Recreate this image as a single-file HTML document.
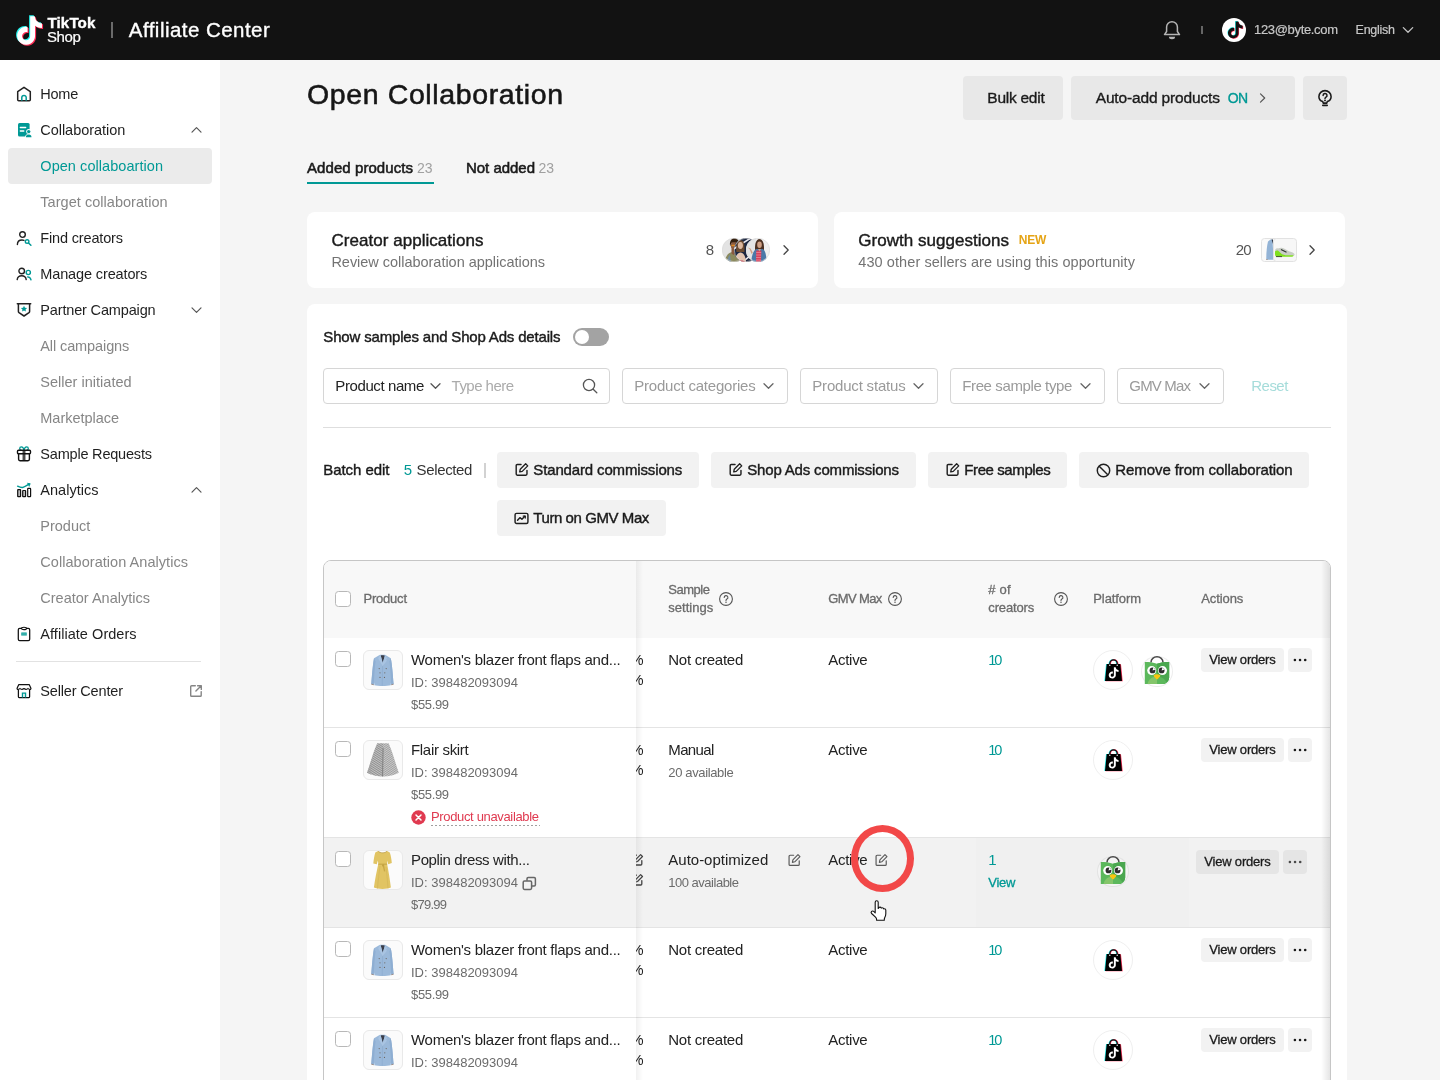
<!DOCTYPE html>
<html lang="en"><head><meta charset="utf-8"><title>Open Collaboration - Affiliate Center</title>
<style>
*{box-sizing:border-box;margin:0;padding:0}
html,body{width:1440px;height:1080px;overflow:hidden}
body{background:#f5f5f5;font-family:"Liberation Sans",sans-serif;color:#1a1a1a;position:relative}
.t{position:absolute;white-space:nowrap;display:inline-block;line-height:1}
.b{position:absolute;display:block}
#root{position:absolute;left:0;top:0;width:1440px;height:1080px;will-change:transform}
</style></head><body><div id="root">
<div class="b" style="left:0.00px;top:0.00px;width:1440.00px;height:60.00px;background:#121212;border-radius:0px;"></div>
<svg class="b" style="left:14.00px;top:14.60px;" width="32" height="34" viewBox="0 0 32 34" fill="none"><g transform="translate(1.3,1.2) scale(1.19)"><path d="M12.525.02c1.31-.02 2.61-.01 3.91-.02.08 1.53.63 3.09 1.75 4.17 1.12 1.11 2.7 1.62 4.24 1.79v4.03c-1.44-.05-2.89-.35-4.2-.97-.57-.26-1.1-.59-1.62-.93-.01 2.92.01 5.84-.02 8.75-.08 1.4-.54 2.79-1.35 3.94-1.31 1.92-3.58 3.17-5.91 3.21-1.43.08-2.86-.31-4.08-1.03-2.02-1.19-3.44-3.37-3.65-5.71-.02-.5-.03-1-.01-1.49.18-1.9 1.12-3.72 2.58-4.96 1.66-1.44 3.98-2.13 6.15-1.72.02 1.48-.04 2.96-.04 4.44-.99-.32-2.15-.23-3.02.37-.63.41-1.11 1.04-1.36 1.75-.21.51-.15 1.07-.14 1.61.24 1.64 1.82 3.02 3.5 2.87 1.12-.01 2.19-.66 2.77-1.61.19-.33.4-.67.41-1.06.1-1.79.06-3.57.07-5.36.01-4.03-.01-8.05.02-12.07z" fill="#25f4ee" transform="translate(-0.9,-0.8)"></path><path d="M12.525.02c1.31-.02 2.61-.01 3.91-.02.08 1.53.63 3.09 1.75 4.17 1.12 1.11 2.7 1.62 4.24 1.79v4.03c-1.44-.05-2.89-.35-4.2-.97-.57-.26-1.1-.59-1.62-.93-.01 2.92.01 5.84-.02 8.75-.08 1.4-.54 2.79-1.35 3.94-1.31 1.92-3.58 3.17-5.91 3.21-1.43.08-2.86-.31-4.08-1.03-2.02-1.19-3.44-3.37-3.65-5.71-.02-.5-.03-1-.01-1.49.18-1.9 1.12-3.72 2.58-4.96 1.66-1.44 3.98-2.13 6.15-1.72.02 1.48-.04 2.96-.04 4.44-.99-.32-2.15-.23-3.02.37-.63.41-1.11 1.04-1.36 1.75-.21.51-.15 1.07-.14 1.61.24 1.64 1.82 3.02 3.5 2.87 1.12-.01 2.19-.66 2.77-1.61.19-.33.4-.67.41-1.06.1-1.79.06-3.57.07-5.36.01-4.03-.01-8.05.02-12.07z" fill="#fe2c55" transform="translate(0.9,0.8)"></path><path d="M12.525.02c1.31-.02 2.61-.01 3.91-.02.08 1.53.63 3.09 1.75 4.17 1.12 1.11 2.7 1.62 4.24 1.79v4.03c-1.44-.05-2.89-.35-4.2-.97-.57-.26-1.1-.59-1.62-.93-.01 2.92.01 5.84-.02 8.75-.08 1.4-.54 2.79-1.35 3.94-1.31 1.92-3.58 3.17-5.91 3.21-1.43.08-2.86-.31-4.08-1.03-2.02-1.19-3.44-3.37-3.65-5.71-.02-.5-.03-1-.01-1.49.18-1.9 1.12-3.72 2.58-4.96 1.66-1.44 3.98-2.13 6.15-1.72.02 1.48-.04 2.96-.04 4.44-.99-.32-2.15-.23-3.02.37-.63.41-1.11 1.04-1.36 1.75-.21.51-.15 1.07-.14 1.61.24 1.64 1.82 3.02 3.5 2.87 1.12-.01 2.19-.66 2.77-1.61.19-.33.4-.67.41-1.06.1-1.79.06-3.57.07-5.36.01-4.03-.01-8.05.02-12.07z" fill="#fff"></path></g></svg>
<span class="t" style="left: 47.5px; top: 15.33px; font-size: 15.2px; font-weight: 700; color: rgb(255, 255, 255); -webkit-text-stroke: 0.35px rgb(255, 255, 255); letter-spacing: 0.071px; margin-right: -0.071px;">TikTok</span>
<span class="t" style="left: 46.9px; top: 29.2px; font-size: 15px; font-weight: 400; color: rgb(255, 255, 255); -webkit-text-stroke: 0.2px rgb(255, 255, 255); letter-spacing: -0.349px; margin-right: 0.349px;">Shop</span>
<div class="b" style="left:111.20px;top:22.00px;width:1.80px;height:16.00px;background:#6a6a6a;border-radius:0px;"></div>
<span class="t" style="left: 128.8px; top: 19.75px; font-size: 20.5px; font-weight: 400; color: rgb(255, 255, 255); -webkit-text-stroke: 0.35px rgb(255, 255, 255); letter-spacing: 0.46px; margin-right: -0.46px;">Affiliate Center</span>
<svg class="b" style="left:1162.00px;top:20.00px;" width="20" height="21" viewBox="0 0 20 21" fill="none"><path d="M2.500 14.600L4.600 11.500V7.050a5.400 5.400 0 0 1 10.800 0V11.500L17.500 14.600Z" stroke="#b4b4b4" stroke-width="1.500" stroke-linejoin="round"></path><path d="M6.900 16.700h6.200a3.100 2.500 0 0 1-6.200 0z" fill="#b4b4b4"></path></svg>
<div class="b" style="left:1201.00px;top:26.00px;width:2.00px;height:8.00px;background:#666;border-radius:0px;"></div>
<div class="b" style="left:1222.00px;top:18.00px;width:24.00px;height:24.00px;background:#fff;border-radius:12px;"></div>
<svg class="b" style="left:1225.50px;top:20.50px;" width="18" height="18" viewBox="0 0 18 18" fill="none"><g transform="translate(0.9,0.5) scale(0.7)"><path d="M12.525.02c1.31-.02 2.61-.01 3.91-.02.08 1.53.63 3.09 1.75 4.17 1.12 1.11 2.7 1.62 4.24 1.79v4.03c-1.44-.05-2.89-.35-4.2-.97-.57-.26-1.1-.59-1.62-.93-.01 2.92.01 5.84-.02 8.75-.08 1.4-.54 2.79-1.35 3.94-1.31 1.92-3.58 3.17-5.91 3.21-1.43.08-2.86-.31-4.08-1.03-2.02-1.19-3.44-3.37-3.65-5.71-.02-.5-.03-1-.01-1.49.18-1.9 1.12-3.72 2.58-4.96 1.66-1.44 3.98-2.13 6.15-1.72.02 1.48-.04 2.96-.04 4.44-.99-.32-2.15-.23-3.02.37-.63.41-1.11 1.04-1.36 1.75-.21.51-.15 1.07-.14 1.61.24 1.64 1.82 3.02 3.5 2.87 1.12-.01 2.19-.66 2.77-1.61.19-.33.4-.67.41-1.06.1-1.79.06-3.57.07-5.36.01-4.03-.01-8.05.02-12.07z" fill="#25f4ee" transform="translate(-0.8,-0.6)"></path><path d="M12.525.02c1.31-.02 2.61-.01 3.91-.02.08 1.53.63 3.09 1.75 4.17 1.12 1.11 2.7 1.62 4.24 1.79v4.03c-1.44-.05-2.89-.35-4.2-.97-.57-.26-1.1-.59-1.62-.93-.01 2.92.01 5.84-.02 8.75-.08 1.4-.54 2.79-1.35 3.94-1.31 1.92-3.58 3.17-5.91 3.21-1.43.08-2.86-.31-4.08-1.03-2.02-1.19-3.44-3.37-3.65-5.71-.02-.5-.03-1-.01-1.49.18-1.9 1.12-3.72 2.58-4.96 1.66-1.44 3.98-2.13 6.15-1.72.02 1.48-.04 2.96-.04 4.44-.99-.32-2.15-.23-3.02.37-.63.41-1.11 1.04-1.36 1.75-.21.51-.15 1.07-.14 1.61.24 1.64 1.82 3.02 3.5 2.87 1.12-.01 2.19-.66 2.77-1.61.19-.33.4-.67.41-1.06.1-1.79.06-3.57.07-5.36.01-4.03-.01-8.05.02-12.07z" fill="#fe2c55" transform="translate(0.8,0.6)"></path><path d="M12.525.02c1.31-.02 2.61-.01 3.91-.02.08 1.53.63 3.09 1.75 4.17 1.12 1.11 2.7 1.62 4.24 1.79v4.03c-1.44-.05-2.89-.35-4.2-.97-.57-.26-1.1-.59-1.62-.93-.01 2.92.01 5.84-.02 8.75-.08 1.4-.54 2.79-1.35 3.94-1.31 1.92-3.58 3.17-5.91 3.21-1.43.08-2.86-.31-4.08-1.03-2.02-1.19-3.44-3.37-3.65-5.71-.02-.5-.03-1-.01-1.49.18-1.9 1.12-3.72 2.58-4.96 1.66-1.44 3.98-2.13 6.15-1.72.02 1.48-.04 2.96-.04 4.44-.99-.32-2.15-.23-3.02.37-.63.41-1.11 1.04-1.36 1.75-.21.51-.15 1.07-.14 1.61.24 1.64 1.82 3.02 3.5 2.87 1.12-.01 2.19-.66 2.77-1.61.19-.33.4-.67.41-1.06.1-1.79.06-3.57.07-5.36.01-4.03-.01-8.05.02-12.07z" fill="#111"></path></g></svg>
<span class="t" style="left: 1254px; top: 23.2px; font-size: 13px; font-weight: 400; color: rgb(200, 200, 200); -webkit-text-stroke: 0.2px rgb(200, 200, 200); letter-spacing: -0.331px; margin-right: 0.331px;">123@byte.com</span>
<span class="t" style="left: 1355.6px; top: 23.62px; font-size: 12.5px; font-weight: 400; color: rgb(200, 200, 200); -webkit-text-stroke: 0.2px rgb(200, 200, 200); letter-spacing: -0.267px; margin-right: 0.267px;">English</span>
<svg class="b" style="left:1401.70px;top:26.00px;" width="12" height="8" viewBox="0 0 12 8" fill="none"><path d="M1.3 1.6L6 6.3l4.7-4.7" stroke="#c4c4c4" stroke-width="1.3" stroke-linecap="round" stroke-linejoin="round"></path></svg>
<div class="b" style="left:0.00px;top:60.00px;width:220.00px;height:1020.00px;background:#fff;border-radius:0px;"></div>
<div class="b" style="left:8.00px;top:148.00px;width:204.00px;height:36.00px;background:#ebebeb;border-radius:4px;"></div>
<span class="t" style="left: 40.3px; top: 86.73px; font-size: 14.5px; font-weight: 400; color: rgb(31, 31, 31); letter-spacing: -0.229px; margin-right: 0.229px;">Home</span>
<span class="t" style="left: 40.3px; top: 122.73px; font-size: 14.5px; font-weight: 400; color: rgb(31, 31, 31); letter-spacing: -0.038px; margin-right: 0.038px;">Collaboration</span>
<span class="t" style="left: 40.3px; top: 158.73px; font-size: 14.5px; font-weight: 400; color: rgb(0, 153, 149); letter-spacing: 0.057px; margin-right: -0.057px;">Open collaboartion</span>
<span class="t" style="left: 40.3px; top: 194.73px; font-size: 14.5px; font-weight: 400; color: rgb(134, 134, 134); letter-spacing: 0.039px; margin-right: -0.039px;">Target collaboration</span>
<span class="t" style="left: 40.3px; top: 230.73px; font-size: 14.5px; font-weight: 400; color: rgb(31, 31, 31); letter-spacing: -0.16px; margin-right: 0.16px;">Find creators</span>
<span class="t" style="left: 40.3px; top: 266.73px; font-size: 14.5px; font-weight: 400; color: rgb(31, 31, 31); letter-spacing: -0.129px; margin-right: 0.129px;">Manage creators</span>
<span class="t" style="left: 40.3px; top: 302.73px; font-size: 14.5px; font-weight: 400; color: rgb(31, 31, 31); letter-spacing: -0.158px; margin-right: 0.158px;">Partner Campaign</span>
<span class="t" style="left: 40.3px; top: 338.73px; font-size: 14.5px; font-weight: 400; color: rgb(134, 134, 134); letter-spacing: -0.105px; margin-right: 0.105px;">All campaigns</span>
<span class="t" style="left: 40.3px; top: 374.73px; font-size: 14.5px; font-weight: 400; color: rgb(134, 134, 134); letter-spacing: 0.015px; margin-right: -0.015px;">Seller initiated</span>
<span class="t" style="left: 40.3px; top: 410.73px; font-size: 14.5px; font-weight: 400; color: rgb(134, 134, 134); letter-spacing: -0.028px; margin-right: 0.028px;">Marketplace</span>
<span class="t" style="left: 40.3px; top: 446.73px; font-size: 14.5px; font-weight: 400; color: rgb(31, 31, 31); letter-spacing: -0.197px; margin-right: 0.197px;">Sample Requests</span>
<span class="t" style="left: 40.3px; top: 482.73px; font-size: 14.5px; font-weight: 400; color: rgb(31, 31, 31); letter-spacing: 0.034px; margin-right: -0.034px;">Analytics</span>
<span class="t" style="left: 40.3px; top: 518.73px; font-size: 14.5px; font-weight: 400; color: rgb(134, 134, 134); letter-spacing: 0.003px; margin-right: -0.003px;">Product</span>
<span class="t" style="left: 40.3px; top: 554.73px; font-size: 14.5px; font-weight: 400; color: rgb(134, 134, 134); letter-spacing: 0.045px; margin-right: -0.045px;">Collaboration Analytics</span>
<span class="t" style="left: 40.3px; top: 590.73px; font-size: 14.5px; font-weight: 400; color: rgb(134, 134, 134); letter-spacing: 0.006px; margin-right: -0.006px;">Creator Analytics</span>
<span class="t" style="left: 40.3px; top: 626.73px; font-size: 14.5px; font-weight: 400; color: rgb(31, 31, 31); letter-spacing: 0.044px; margin-right: -0.044px;">Affiliate Orders</span>
<span class="t" style="left: 40.3px; top: 683.73px; font-size: 14.5px; font-weight: 400; color: rgb(31, 31, 31); letter-spacing: -0.16px; margin-right: 0.16px;">Seller Center</span>
<div class="b" style="left:16.00px;top:661.40px;width:184.70px;height:1.00px;background:#e2e2e2;border-radius:0px;"></div>
<svg class="b" style="left:190.50px;top:126.00px;" width="11" height="8" viewBox="0 0 11 8" fill="none"><path d="M1 6.2L5.5 1.7 10 6.2" stroke="#555" stroke-width="1.2" stroke-linecap="round" stroke-linejoin="round"></path></svg>
<svg class="b" style="left:190.50px;top:306.00px;" width="11" height="8" viewBox="0 0 11 8" fill="none"><path d="M1 1.8L5.5 6.3 10 1.8" stroke="#555" stroke-width="1.2" stroke-linecap="round" stroke-linejoin="round"></path></svg>
<svg class="b" style="left:190.50px;top:486.00px;" width="11" height="8" viewBox="0 0 11 8" fill="none"><path d="M1 6.2L5.5 1.7 10 6.2" stroke="#555" stroke-width="1.2" stroke-linecap="round" stroke-linejoin="round"></path></svg>
<svg class="b" style="left:189.30px;top:684.30px;" width="14" height="14" viewBox="0 0 14 14" fill="none"><path d="M6.300 1.800H2.600a.9.900 0 0 0-.9.900v8.700c0 .5.400.9.900.9h8.700c.5 0 .9-.4.900-.9V7.600" stroke="#858585" stroke-width="1.400" stroke-linecap="round"></path><path d="M8.600 1.700h3.700v3.700M12 2L6.900 7.100" stroke="#858585" stroke-width="1.400" stroke-linecap="round" stroke-linejoin="round"></path></svg>
<svg class="b" style="left:15.00px;top:85.00px;" width="18" height="18" viewBox="0 0 18 18" fill="none"><path d="M2.7 6.6L9 2.3l6.300 4.300v8.100a1 1 0 0 1-1 1H3.700a1 1 0 0 1-1-1z" stroke="#222" stroke-width="1.500" stroke-linejoin="round"></path><path d="M6.800 15.800v-3.200a2.200 2.200 0 0 1 4.400 0v3.200" stroke="#009995" stroke-width="1.500"></path></svg>
<svg class="b" style="left:16.00px;top:121.00px;" width="18" height="18" viewBox="0 0 18 18" fill="none"><rect x="2" y="2" width="11.600" height="13.400" rx="1.500" fill="#009995"></rect><path d="M4.300 6.500h5.400M4.300 10h3.500" stroke="#fff" stroke-width="1.300" stroke-linecap="round"></path><circle cx="12.700" cy="10.600" r="2.500" fill="#fff"></circle><circle cx="12.700" cy="10.600" r="1.700" fill="#009995"></circle><path d="M9 16.800a3.700 3.700 0 0 1 7.400 0z" fill="#fff"></path><path d="M9.900 16.200a2.800 2.800 0 0 1 5.600 0z" fill="#009995"></path></svg>
<svg class="b" style="left:15.00px;top:229.00px;" width="18" height="18" viewBox="0 0 18 18" fill="none"><circle cx="7.500" cy="5.600" r="2.800" stroke="#222" stroke-width="1.400"></circle><path d="M2.400 15.600c0-2.700 1.800-4.600 4.600-4.600.8 0 1.400.1 2 .3" stroke="#222" stroke-width="1.400" stroke-linecap="round"></path><circle cx="12.100" cy="12.600" r="1.800" stroke="#009995" stroke-width="1.400"></circle><path d="M13.500 14l2.400 2.300" stroke="#009995" stroke-width="1.500" stroke-linecap="round"></path></svg>
<svg class="b" style="left:15.00px;top:265.00px;" width="18" height="18" viewBox="0 0 18 18" fill="none"><circle cx="6.700" cy="6" r="2.800" stroke="#222" stroke-width="1.400"></circle><path d="M2.200 14.600c.3-2.400 2.100-3.900 4.500-3.900s4.200 1.500 4.500 3.900" stroke="#222" stroke-width="1.400" stroke-linecap="round"></path><circle cx="13.300" cy="7.500" r="2.100" stroke="#009995" stroke-width="1.400"></circle><path d="M12.600 11.900c1.900.2 3.100 1.300 3.400 3" stroke="#009995" stroke-width="1.400" stroke-linecap="round"></path></svg>
<svg class="b" style="left:15.00px;top:301.00px;" width="18" height="18" viewBox="0 0 18 18" fill="none"><path d="M2.300 2.700h13.400" stroke="#222" stroke-width="1.500" stroke-linecap="round"></path><path d="M3.400 2.900v7.600c0 .5.200.9.600 1.200L9 15l5-3.300c.4-.3.600-.7.600-1.200V2.900" stroke="#222" stroke-width="1.500" stroke-linejoin="round"></path><path d="M9 4.700l.95 1.950 2.150.3-1.550 1.500.37 2.150L9 9.600l-1.920 1 .37-2.150L5.900 6.950l2.150-.3z" fill="#009995"></path></svg>
<svg class="b" style="left:15.00px;top:445.40px;" width="18" height="18" viewBox="0 0 18 18" fill="none"><path d="M9 5.200C8.600 3 7.600 1.900 6.400 1.900c-1.100 0-1.700.8-1.700 1.700 0 .8.500 1.500 1.200 1.600M9 5.200c.4-2.200 1.400-3.300 2.600-3.300 1.100 0 1.700.8 1.700 1.700 0 .8-.5 1.500-1.200 1.600" stroke="#009995" stroke-width="1.300" stroke-linecap="round"></path><rect x="2.500" y="5.300" width="13" height="3.500" rx="1" stroke="#111" stroke-width="1.400"></rect><path d="M3.600 8.900v5.400c0 .8.600 1.400 1.400 1.400h8c.8 0 1.400-.6 1.400-1.400V8.900" stroke="#111" stroke-width="1.400"></path><path d="M8.200 5.300v10.400M9.800 5.300v10.400" stroke="#111" stroke-width="1.100"></path></svg>
<svg class="b" style="left:15.00px;top:481.00px;" width="18" height="18" viewBox="0 0 18 18" fill="none"><rect x="2.700" y="8.600" width="2.900" height="7.100" rx=".5" fill="#bbb" stroke="#111" stroke-width="1.200"></rect><rect x="7.700" y="9.500" width="2.900" height="6.200" rx=".5" fill="#bbb" stroke="#111" stroke-width="1.200"></rect><rect x="12.700" y="7.400" width="2.900" height="8.300" rx=".5" fill="#fff" stroke="#111" stroke-width="1.200"></rect><path d="M2.600 5.200c2 1 3.500 1.500 5 1.300 2-.3 4.200-2 6.800-3.600" stroke="#009995" stroke-width="1.400" stroke-linecap="round" fill="none"></path><path d="M12 1.700l3.700.8-1.500 3.400z" fill="#009995"></path></svg>
<svg class="b" style="left:15.00px;top:625.00px;" width="18" height="18" viewBox="0 0 18 18" fill="none"><rect x="3.300" y="3.400" width="11.400" height="12.200" rx="1.400" stroke="#111" stroke-width="1.250"></rect><ellipse cx="9" cy="3.400" rx="2.500" ry="1.150" fill="#fff" stroke="#111" stroke-width="1.200"></ellipse><rect x="6.200" y="7.300" width="5.600" height="3.500" rx=".4" fill="#4dbab6"></rect><path d="M6.200 9h5.600" stroke="#009995" stroke-width=".7"></path></svg>
<svg class="b" style="left:15.00px;top:682.00px;" width="18" height="18" viewBox="0 0 18 18" fill="none"><path d="M3.700 2.700h10.600l1.600 3.600c.2.500-.3 1.100-1 1.100-.9 0-1.500-.4-1.900-.9-.4.500-1 .9-1.900.9s-1.500-.4-2.100-.9c-.600.500-1.200.900-2.100.900s-1.500-.4-1.900-.9c-.4.500-1 .9-1.900.9-.7 0-1.200-.6-1-1.100z" stroke="#111" stroke-width="1.200" stroke-linejoin="round"></path><path d="M3.400 7.600v7.200c0 .4.300.7.700.7h9.800c.4 0 .7-.3.700-.7V7.600" stroke="#111" stroke-width="1.250"></path><path d="M7.500 15.400v-4.300h3v4.300" stroke="#009995" stroke-width="1.400"></path></svg>
<span class="t" style="left: 307px; top: 80.37px; font-size: 28.5px; font-weight: 400; color: rgb(22, 22, 22); -webkit-text-stroke: 0.55px rgb(22, 22, 22); letter-spacing: 0.613px; margin-right: -0.613px;">Open Collaboration</span>
<div class="b" style="left:963.00px;top:76.00px;width:100.00px;height:44.00px;background:#e8e8e8;border-radius:4px;"></div>
<span class="t" style="left: 987.3px; top: 90.18px; font-size: 15.5px; font-weight: 400; color: rgb(26, 26, 26); -webkit-text-stroke: 0.35px rgb(26, 26, 26); letter-spacing: -0.257px; margin-right: 0.257px;">Bulk edit</span>
<div class="b" style="left:1071.00px;top:76.00px;width:224.00px;height:44.00px;background:#e8e8e8;border-radius:4px;"></div>
<span class="t" style="left: 1095.7px; top: 90.18px; font-size: 15.5px; font-weight: 400; color: rgb(26, 26, 26); -webkit-text-stroke: 0.35px rgb(26, 26, 26); letter-spacing: -0.148px; margin-right: 0.148px;">Auto-add products</span>
<span class="t" style="left: 1227.7px; top: 91.45px; font-size: 14px; font-weight: 400; color: rgb(0, 153, 149); -webkit-text-stroke: 0.35px rgb(0, 153, 149); letter-spacing: -0.7px; margin-right: 0.7px;">ON</span>
<svg class="b" style="left:1258.00px;top:92.00px;" width="10" height="12" viewBox="0 0 10 12" fill="none"><path d="M2.500 1.900L6.700 6 2.500 10.100" stroke="#555" stroke-width="1.200" stroke-linecap="round" stroke-linejoin="round"></path></svg>
<div class="b" style="left:1303.00px;top:76.00px;width:44.00px;height:44.00px;background:#e8e8e8;border-radius:4px;"></div>
<svg class="b" style="left:1316.00px;top:88.00px;" width="18" height="20" viewBox="0 0 18 20" fill="none"><path d="M6.700 13.600C4.300 12.700 2.900 10.800 2.900 8.700a6.100 6.100 0 0 1 12.200 0c0 2.100-1.400 4-3.800 4.900l-.5 1.500H7.200z" stroke="#1a1a1a" stroke-width="1.550" stroke-linejoin="round"></path><path d="M6.800 17.400h4.400" stroke="#1a1a1a" stroke-width="1.600" stroke-linecap="round"></path><path d="M7.100 7.400a1.950 1.950 0 1 1 2.900 1.700c-.7.400-1 .8-1 1.500" stroke="#1a1a1a" stroke-width="1.500" stroke-linecap="round"></path><circle cx="9" cy="12.400" r=".95" fill="#1a1a1a"></circle></svg>
<span class="t" style="left: 307px; top: 160.3px; font-size: 15px; font-weight: 400; color: rgb(26, 26, 26); -webkit-text-stroke: 0.55px rgb(26, 26, 26); letter-spacing: 0.071px; margin-right: -0.071px;">Added products</span>
<span class="t" style="left: 417px; top: 161.15px; font-size: 14px; font-weight: 400; color: rgb(160, 160, 160); letter-spacing: -0.078px; margin-right: 0.078px;">23</span>
<div class="b" style="left:307.00px;top:182.00px;width:127.00px;height:2.00px;background:#009995;border-radius:0px;"></div>
<span class="t" style="left: 466px; top: 160.3px; font-size: 15px; font-weight: 400; color: rgb(26, 26, 26); -webkit-text-stroke: 0.55px rgb(26, 26, 26); letter-spacing: -0.029px; margin-right: 0.029px;">Not added</span>
<span class="t" style="left: 538.5px; top: 161.15px; font-size: 14px; font-weight: 400; color: rgb(160, 160, 160); letter-spacing: -0.078px; margin-right: 0.078px;">23</span>
<div class="b" style="left:307.00px;top:212.00px;width:511.00px;height:76.00px;background:#fff;border-radius:8px;"></div>
<div class="b" style="left:834.00px;top:212.00px;width:511.00px;height:76.00px;background:#fff;border-radius:8px;"></div>
<span class="t" style="left: 331.4px; top: 232.31px; font-size: 17px; font-weight: 400; color: rgb(26, 26, 26); -webkit-text-stroke: 0.4px rgb(26, 26, 26); letter-spacing: 0.042px; margin-right: -0.042px;">Creator applications</span>
<span class="t" style="left: 331.4px; top: 254.73px; font-size: 14.5px; font-weight: 400; color: rgb(115, 115, 115); letter-spacing: -0.025px; margin-right: 0.025px;">Review collaboration applications</span>
<span class="t" style="left: 705.7px; top: 242.3px; font-size: 15px; font-weight: 400; color: rgb(85, 85, 85); letter-spacing: 0px;">8</span>
<svg class="b" style="left:722px;top:238px" width="24" height="24" viewBox="0 0 24 24"><defs><clipPath id="av1"><circle cx="12" cy="12" r="12"></circle></clipPath></defs><g clip-path="url(#av1)"><rect width="24" height="24" fill="#e3e3e3"></rect><path d="M3 24C3.500 17 7 14.500 10.500 14L13.500 14C16 15 17 19 17.500 24Z" fill="#8b8a5e"></path><path d="M9.500 10.500H13.500V15.500L11.500 17 9.500 15.500Z" fill="#8a5a3e"></path><ellipse cx="11.800" cy="7.600" rx="3" ry="4" fill="#8e5d40"></ellipse><path d="M8 7.500C7.500 3 9.500 .3 12.500 .3C15.500 .3 17 2.500 16.500 6C15 4.500 12 4 10 4.500C9 5 8.700 6.300 8.500 8Z" fill="#34200f"></path><rect x="9.300" y="6.800" width="4.800" height="1.500" rx=".7" fill="#e08a20"></rect><path d="M5 24C5.500 20 6.500 18 8 17L9 24Z" fill="#6f8fb0" opacity=".8"></path></g><circle cx="12" cy="12" r="11.700" fill="none" stroke="#dcdcdc" stroke-width=".6"></circle></svg>
<svg class="b" style="left:734px;top:238px" width="24" height="24" viewBox="0 0 24 24"><defs><clipPath id="av2"><circle cx="12" cy="12" r="12"></circle></clipPath></defs><g clip-path="url(#av2)"><rect width="24" height="24" fill="#1d2740"></rect><path d="M-2 6L14 -4M-2 12L20 -2M6 26L26 10M12 28L28 16" stroke="#e8e8ee" stroke-width="1.600"></path><path d="M2.500 14C1.500 8 3 2.500 6.500 2.300C10 2.100 11 7 10.300 14Z" fill="#6b4a30"></path><ellipse cx="6.400" cy="7.500" rx="2.500" ry="3.400" fill="#dcb89f"></ellipse><path d="M1 24C1.500 18 3.500 14.500 6.500 14.500C9.500 14.500 11.500 18 12 24Z" fill="#e2c4b0"></path><path d="M2 24C3 21.500 10 21.500 11 24Z" fill="#c62b3c"></path></g><circle cx="12" cy="12" r="11.700" fill="none" stroke="#dcdcdc" stroke-width=".6"></circle></svg>
<svg class="b" style="left:746px;top:238px" width="24" height="24" viewBox="0 0 24 24"><defs><clipPath id="av3"><circle cx="12" cy="12" r="12"></circle></clipPath></defs><g clip-path="url(#av3)"><rect width="24" height="24" fill="#efefef"></rect><path d="M0 0H10V24H0Z" fill="#e4e4e4"></path><path d="M9.200 12.800C8.500 8 9.500 1 13.500 1C17.500 1 18.500 8 17.800 12.800Z" fill="#4a2f20"></path><ellipse cx="13.500" cy="6.800" rx="2.300" ry="3.200" fill="#cfa084"></ellipse><path d="M5.300 24C5.500 17 8 11.500 10.500 11L16.500 11C19 11.500 20.500 17 20.500 24Z" fill="#4b78a8"></path><path d="M10 24L10.300 12.500H15.300L15 24Z" fill="#d9405c"></path><path d="M10.200 14.500H15.200M10.100 17H15.100M10.100 19.500H15M10 22H15" stroke="#f0a0b0" stroke-width=".6"></path><path d="M1.800 9.400L4.500 10.500 6.800 14.500 5.500 16 3.800 11.500Z" fill="#cfa084"></path><path d="M12 11L13.500 13.500 15 11Z" fill="#cfa084"></path></g><circle cx="12" cy="12" r="11.700" fill="none" stroke="#dcdcdc" stroke-width=".6"></circle></svg>
<svg class="b" style="left:781.50px;top:244.00px;" width="9" height="12" viewBox="0 0 9 12" fill="none"><path d="M2 1.8L6.2 6 2 10.2" stroke="#444" stroke-width="1.3" stroke-linecap="round" stroke-linejoin="round"></path></svg>
<span class="t" style="left: 858.3px; top: 232.11px; font-size: 17px; font-weight: 400; color: rgb(26, 26, 26); -webkit-text-stroke: 0.4px rgb(26, 26, 26); letter-spacing: 0.026px; margin-right: -0.026px;">Growth suggestions</span>
<span class="t" style="left: 1018.7px; top: 234.14px; font-size: 12px; font-weight: 700; color: rgb(229, 164, 21); letter-spacing: -0.2px; margin-right: 0.2px;">NEW</span>
<span class="t" style="left: 858.3px; top: 255.23px; font-size: 14.5px; font-weight: 400; color: rgb(115, 115, 115); letter-spacing: 0.08px; margin-right: -0.08px;">430 other sellers are using this opportunity</span>
<span class="t" style="left: 1235.7px; top: 242.3px; font-size: 15px; font-weight: 400; color: rgb(85, 85, 85); letter-spacing: -0.688px; margin-right: 0.688px;">20</span>
<div class="b" style="left:1261px;top:238px;width:24px;height:24px;border-radius:3.500px;overflow:hidden;background:#fafafa;border:1px solid #e2e2e2"><svg class="b" style="left:-1px;top:-1px" width="24" height="24" viewBox="0 0 24 24"><path d="M9.500 1.600L11.500 1.600 12.500 21.800 5.200 21.800C5.300 15 5.800 8 7 3.500Z" fill="#93b3d6"></path><path d="M10.500 1.600H12V6Z" fill="#333a48"></path><path d="M5.200 21.500h1.500" stroke="#a87f62" stroke-width=".6"></path></svg></div>
<div class="b" style="left:1273.300px;top:238px;width:23.700px;height:24px;border-radius:3.500px;overflow:hidden;background:#f7f7f7;border:1px solid #e2e2e2"><svg class="b" style="left:-1px;top:-1px" width="24" height="24" viewBox="0 0 24 24"><path d="M2.300 11.500C3 10.500 4 10 5 10.500C7 9.500 9.500 9.500 11 10.500L16 13.300C18 14 20.500 14.500 21.500 16C21.800 17 21.300 17.800 20 17.800H4C2.500 17.800 1.800 16.500 2 14.500Z" fill="#c9cdc6"></path><path d="M2 13.500C3 12.500 4.500 12.300 5.500 13L9 16.300 12.500 17.200 20.500 17.300C20.500 18.300 19.500 18.800 18 18.800H4C2.300 18.800 1.700 17 2 13.500Z" fill="#7fe01e"></path><path d="M8 11.500L13.500 14.300" stroke="#2c3430" stroke-width="1.100"></path><path d="M3 18.600H9" stroke="#2a2a2a" stroke-width=".8"></path></svg></div>
<svg class="b" style="left:1308.30px;top:244.00px;" width="9" height="12" viewBox="0 0 9 12" fill="none"><path d="M2 1.8L6.2 6 2 10.2" stroke="#444" stroke-width="1.3" stroke-linecap="round" stroke-linejoin="round"></path></svg>
<div class="b" style="left:307.00px;top:304.00px;width:1040.00px;height:800.00px;background:#fff;border-radius:8px;"></div>
<span class="t" style="left: 323.3px; top: 329.3px; font-size: 15px; font-weight: 400; color: rgb(26, 26, 26); -webkit-text-stroke: 0.4px rgb(26, 26, 26); letter-spacing: -0.171px; margin-right: 0.171px;">Show samples and Shop Ads details</span>
<div class="b" style="left:573.00px;top:328.00px;width:36.00px;height:18.00px;background:#a3a3a3;border-radius:9px;"><div class="b" style="left:2px;top:2px;width:14px;height:14px;border-radius:7px;background:#fff"></div></div>
<div class="b" style="left:323.00px;top:368.00px;width:287.00px;height:36.00px;background:#fff;border-radius:4px;border:1px solid #d6d6d6;"></div>
<span class="t" style="left: 335.3px; top: 378.1px; font-size: 15px; font-weight: 400; color: rgb(34, 34, 34); letter-spacing: -0.399px; margin-right: 0.399px;">Product name</span>
<svg class="b" style="left:429.70px;top:382.30px;" width="11" height="8" viewBox="0 0 11 8" fill="none"><path d="M1 1.8L5.5 6.3 10 1.8" stroke="#555" stroke-width="1.3" stroke-linecap="round" stroke-linejoin="round"></path></svg>
<span class="t" style="left: 451.6px; top: 378.1px; font-size: 15px; font-weight: 400; color: rgb(171, 171, 171); letter-spacing: -0.54px; margin-right: 0.54px;">Type here</span>
<svg class="b" style="left:582.00px;top:378.00px;" width="16" height="16" viewBox="0 0 16 16" fill="none"><circle cx="7" cy="7" r="5.6" stroke="#555" stroke-width="1.3"></circle><path d="M11.2 11.2l3.6 3.6" stroke="#555" stroke-width="1.3" stroke-linecap="round"></path></svg>
<div class="b" style="left:622.30px;top:368.00px;width:165.40px;height:36.00px;background:#fff;border-radius:4px;border:1px solid #d6d6d6;"></div>
<span class="t" style="left: 634.3px; top: 378.1px; font-size: 15px; font-weight: 400; color: rgb(154, 154, 154); letter-spacing: -0.216px; margin-right: 0.216px;">Product categories</span>
<svg class="b" style="left:762.80px;top:382.30px;" width="11" height="8" viewBox="0 0 11 8" fill="none"><path d="M1 1.8L5.5 6.3 10 1.8" stroke="#666" stroke-width="1.3" stroke-linecap="round" stroke-linejoin="round"></path></svg>
<div class="b" style="left:800.00px;top:368.00px;width:137.70px;height:36.00px;background:#fff;border-radius:4px;border:1px solid #d6d6d6;"></div>
<span class="t" style="left: 812.3px; top: 378.1px; font-size: 15px; font-weight: 400; color: rgb(154, 154, 154); letter-spacing: -0.192px; margin-right: 0.192px;">Product status</span>
<svg class="b" style="left:912.80px;top:382.30px;" width="11" height="8" viewBox="0 0 11 8" fill="none"><path d="M1 1.8L5.5 6.3 10 1.8" stroke="#666" stroke-width="1.3" stroke-linecap="round" stroke-linejoin="round"></path></svg>
<div class="b" style="left:950.00px;top:368.00px;width:154.70px;height:36.00px;background:#fff;border-radius:4px;border:1px solid #d6d6d6;"></div>
<span class="t" style="left: 962.3px; top: 378.1px; font-size: 15px; font-weight: 400; color: rgb(154, 154, 154); letter-spacing: -0.393px; margin-right: 0.393px;">Free sample type</span>
<svg class="b" style="left:1079.50px;top:382.30px;" width="11" height="8" viewBox="0 0 11 8" fill="none"><path d="M1 1.8L5.5 6.3 10 1.8" stroke="#666" stroke-width="1.3" stroke-linecap="round" stroke-linejoin="round"></path></svg>
<div class="b" style="left:1117.00px;top:368.00px;width:106.70px;height:36.00px;background:#fff;border-radius:4px;border:1px solid #d6d6d6;"></div>
<span class="t" style="left: 1129.3px; top: 378.1px; font-size: 15px; font-weight: 400; color: rgb(154, 154, 154); letter-spacing: -0.831px; margin-right: 0.831px;">GMV Max</span>
<svg class="b" style="left:1198.50px;top:382.30px;" width="11" height="8" viewBox="0 0 11 8" fill="none"><path d="M1 1.8L5.5 6.3 10 1.8" stroke="#666" stroke-width="1.3" stroke-linecap="round" stroke-linejoin="round"></path></svg>
<span class="t" style="left: 1251.3px; top: 378.1px; font-size: 15px; font-weight: 400; color: rgb(165, 220, 218); letter-spacing: -0.547px; margin-right: 0.547px;">Reset</span>
<div class="b" style="left:323.00px;top:427.00px;width:1008.00px;height:1.00px;background:#dedede;border-radius:0px;"></div>
<span class="t" style="left: 323.3px; top: 462.1px; font-size: 15px; font-weight: 400; color: rgb(26, 26, 26); -webkit-text-stroke: 0.4px rgb(26, 26, 26); letter-spacing: -0.069px; margin-right: 0.069px;">Batch edit</span>
<span class="t" style="left: 403.7px; top: 462.1px; font-size: 15px; font-weight: 400; color: rgb(0, 153, 149); letter-spacing: 0px;">5</span>
<span class="t" style="left: 416.6px; top: 462.1px; font-size: 15px; font-weight: 400; color: rgb(51, 51, 51); letter-spacing: -0.368px; margin-right: 0.368px;">Selected</span>
<div class="b" style="left:484.30px;top:463.00px;width:1.50px;height:15.00px;background:#d2d2d2;border-radius:0px;"></div>
<div class="b" style="left:497.00px;top:452.00px;width:202.00px;height:36.00px;background:#f2f2f2;border-radius:4px;"></div>
<svg class="b" style="left:513.60px;top:462.30px;" width="15.4" height="15.4" viewBox="0 0 14 14" fill="none"><path d="M6.4 2.2H3a1 1 0 0 0-1 1V11a1 1 0 0 0 1 1h7.8a1 1 0 0 0 1-1V7.6" stroke="#1f1f1f" stroke-width="1.3" stroke-linecap="round"></path><path d="M10.6 1.6l1.9 1.9-5 5-2.3.5.5-2.4z" stroke="#1f1f1f" stroke-width="1.2" stroke-linejoin="round"></path></svg>
<span class="t" style="left: 533.3px; top: 462.2px; font-size: 15px; font-weight: 400; color: rgb(26, 26, 26); -webkit-text-stroke: 0.4px rgb(26, 26, 26); letter-spacing: -0.144px; margin-right: 0.144px;">Standard commissions</span>
<div class="b" style="left:711.00px;top:452.00px;width:205.00px;height:36.00px;background:#f2f2f2;border-radius:4px;"></div>
<svg class="b" style="left:727.60px;top:462.30px;" width="15.4" height="15.4" viewBox="0 0 14 14" fill="none"><path d="M6.4 2.2H3a1 1 0 0 0-1 1V11a1 1 0 0 0 1 1h7.8a1 1 0 0 0 1-1V7.6" stroke="#1f1f1f" stroke-width="1.3" stroke-linecap="round"></path><path d="M10.6 1.6l1.9 1.9-5 5-2.3.5.5-2.4z" stroke="#1f1f1f" stroke-width="1.2" stroke-linejoin="round"></path></svg>
<span class="t" style="left: 747.3px; top: 462.2px; font-size: 15px; font-weight: 400; color: rgb(26, 26, 26); -webkit-text-stroke: 0.4px rgb(26, 26, 26); letter-spacing: -0.178px; margin-right: 0.178px;">Shop Ads commissions</span>
<div class="b" style="left:928.00px;top:452.00px;width:138.70px;height:36.00px;background:#f2f2f2;border-radius:4px;"></div>
<svg class="b" style="left:944.60px;top:462.30px;" width="15.4" height="15.4" viewBox="0 0 14 14" fill="none"><path d="M6.4 2.2H3a1 1 0 0 0-1 1V11a1 1 0 0 0 1 1h7.8a1 1 0 0 0 1-1V7.6" stroke="#1f1f1f" stroke-width="1.3" stroke-linecap="round"></path><path d="M10.6 1.6l1.9 1.9-5 5-2.3.5.5-2.4z" stroke="#1f1f1f" stroke-width="1.2" stroke-linejoin="round"></path></svg>
<span class="t" style="left: 964.3px; top: 462.2px; font-size: 15px; font-weight: 400; color: rgb(26, 26, 26); -webkit-text-stroke: 0.4px rgb(26, 26, 26); letter-spacing: -0.407px; margin-right: 0.407px;">Free samples</span>
<div class="b" style="left:1079.00px;top:452.00px;width:230.00px;height:36.00px;background:#f2f2f2;border-radius:4px;"></div>
<svg class="b" style="left:1095.60px;top:462.60px;" width="15" height="15" viewBox="0 0 14 14" fill="none"><circle cx="7" cy="7" r="5.8" stroke="#1f1f1f" stroke-width="1.35"></circle><path d="M3 3l8 8" stroke="#1f1f1f" stroke-width="1.35"></path></svg>
<span class="t" style="left: 1115.3px; top: 462.2px; font-size: 15px; font-weight: 400; color: rgb(26, 26, 26); -webkit-text-stroke: 0.4px rgb(26, 26, 26); letter-spacing: -0.077px; margin-right: 0.077px;">Remove from collaboration</span>
<div class="b" style="left:497.00px;top:500.00px;width:169.00px;height:36.00px;background:#f2f2f2;border-radius:4px;"></div>
<svg class="b" style="left:513.60px;top:510.60px;" width="15" height="15" viewBox="0 0 14 14" fill="none"><rect x="1" y="2.2" width="12" height="9.4" rx="1.4" stroke="#1f1f1f" stroke-width="1.35"></rect><path d="M3.300 8.600l2.200-2.400 1.900 1.500 2.700-2.700" stroke="#1f1f1f" stroke-width="1.35" stroke-linecap="round" stroke-linejoin="round"></path><path d="M8.600 4.700h1.900v1.900" stroke="#1f1f1f" stroke-width="1.2" stroke-linecap="round" stroke-linejoin="round"></path></svg>
<span class="t" style="left: 533.3px; top: 510.2px; font-size: 15px; font-weight: 400; color: rgb(26, 26, 26); -webkit-text-stroke: 0.4px rgb(26, 26, 26); letter-spacing: -0.427px; margin-right: 0.427px;">Turn on GMV Max</span>
<div class="b" style="left:323px;top:560px;width:1008px;height:560px;border:1px solid #c6c6c6;border-radius:8px 8px 0 0;overflow:hidden;background:#fff"><div class="b" style="left:-324px;top:-561px;width:1440px;height:1200px">
<div class="b" style="left:324.00px;top:561.00px;width:1006.00px;height:77.00px;background:#f8f8f8;border-radius:0px;"></div>
<span class="t" style="left: 363.5px; top: 592px; font-size: 13px; font-weight: 400; color: rgb(107, 107, 107); -webkit-text-stroke: 0.3px rgb(107, 107, 107); letter-spacing: -0.219px; margin-right: 0.219px;">Product</span>
<span class="t" style="left: 668.3px; top: 583px; font-size: 13px; font-weight: 400; color: rgb(107, 107, 107); -webkit-text-stroke: 0.3px rgb(107, 107, 107); letter-spacing: -0.476px; margin-right: 0.476px;">Sample</span>
<span class="t" style="left: 668.3px; top: 601px; font-size: 13px; font-weight: 400; color: rgb(107, 107, 107); -webkit-text-stroke: 0.3px rgb(107, 107, 107); letter-spacing: 0.027px; margin-right: -0.027px;">settings</span>
<span class="t" style="left: 828.3px; top: 592px; font-size: 13px; font-weight: 400; color: rgb(107, 107, 107); -webkit-text-stroke: 0.3px rgb(107, 107, 107); letter-spacing: -0.633px; margin-right: 0.633px;">GMV Max</span>
<span class="t" style="left: 988.3px; top: 583px; font-size: 13px; font-weight: 400; color: rgb(107, 107, 107); -webkit-text-stroke: 0.3px rgb(107, 107, 107); letter-spacing: 0.237px; margin-right: -0.237px;"># of</span>
<span class="t" style="left: 988.3px; top: 601px; font-size: 13px; font-weight: 400; color: rgb(107, 107, 107); -webkit-text-stroke: 0.3px rgb(107, 107, 107); letter-spacing: -0.138px; margin-right: 0.138px;">creators</span>
<span class="t" style="left: 1093.3px; top: 592px; font-size: 13px; font-weight: 400; color: rgb(107, 107, 107); -webkit-text-stroke: 0.3px rgb(107, 107, 107); letter-spacing: -0.101px; margin-right: 0.101px;">Platform</span>
<span class="t" style="left: 1201.3px; top: 592px; font-size: 13px; font-weight: 400; color: rgb(107, 107, 107); -webkit-text-stroke: 0.3px rgb(107, 107, 107); letter-spacing: -0.107px; margin-right: 0.107px;">Actions</span>
<svg class="b" style="left:718.20px;top:591.20px;" width="16" height="16" viewBox="0 0 16 16" fill="none"><circle cx="8" cy="8" r="6.4" stroke="#555" stroke-width="1.1"></circle><path d="M6.2 6.5a1.85 1.85 0 1 1 2.7 1.6c-.6.35-.9.7-.9 1.4" stroke="#555" stroke-width="1.1" stroke-linecap="round"></path><circle cx="8" cy="11.2" r=".75" fill="#555"></circle></svg>
<svg class="b" style="left:887.30px;top:591.20px;" width="16" height="16" viewBox="0 0 16 16" fill="none"><circle cx="8" cy="8" r="6.4" stroke="#555" stroke-width="1.1"></circle><path d="M6.2 6.5a1.85 1.85 0 1 1 2.7 1.6c-.6.35-.9.7-.9 1.4" stroke="#555" stroke-width="1.1" stroke-linecap="round"></path><circle cx="8" cy="11.2" r=".75" fill="#555"></circle></svg>
<svg class="b" style="left:1053.00px;top:591.20px;" width="16" height="16" viewBox="0 0 16 16" fill="none"><circle cx="8" cy="8" r="6.4" stroke="#555" stroke-width="1.1"></circle><path d="M6.2 6.5a1.85 1.85 0 1 1 2.7 1.6c-.6.35-.9.7-.9 1.4" stroke="#555" stroke-width="1.1" stroke-linecap="round"></path><circle cx="8" cy="11.2" r=".75" fill="#555"></circle></svg>
<div class="b" style="left:335.00px;top:591.00px;width:16.00px;height:16.00px;background:#fff;border-radius:3.5px;border:1px solid #b8b8b8;"></div>
<div class="b" style="left:324.00px;top:838.00px;width:1006.00px;height:89.00px;background:#f2f2f2;border-radius:0px;"></div>
<div class="b" style="left:976.00px;top:838.00px;width:213.00px;height:89.00px;background:#f0f0f0;border-radius:0px;"></div>
<div class="b" style="left:324.00px;top:727.00px;width:1006.00px;height:1.00px;background:#e4e4e4;border-radius:0px;"></div>
<div class="b" style="left:324.00px;top:837.00px;width:1006.00px;height:1.00px;background:#e4e4e4;border-radius:0px;"></div>
<div class="b" style="left:324.00px;top:927.00px;width:1006.00px;height:1.00px;background:#e4e4e4;border-radius:0px;"></div>
<div class="b" style="left:324.00px;top:1017.00px;width:1006.00px;height:1.00px;background:#e4e4e4;border-radius:0px;"></div>
<div class="b" style="left:335.00px;top:651.00px;width:16.00px;height:16.00px;background:#fff;border-radius:3.5px;border:1px solid #b8b8b8;"></div>
<div class="b" style="left:363px;top:650px;width:40px;height:40px;border:1px solid #e9e9e9;border-radius:6px;background:#fbfbfb;overflow:hidden"><svg class="b" style="left:-1px;top:-1px" width="40" height="40" viewBox="0 0 40 40"><path d="M17 4.700L22 4.700 27.800 8.200C29 14 30 26 30.600 34.300L28.300 34.900 27.900 32.500 27.800 35.200C24 36.100 15 36.100 11.400 35.200L11.300 32.500 10.800 34.900 8.300 34.300C8.800 26 9.800 14 11 8.200Z" fill="#9bb9da"></path><path d="M11 8.200C10 14 9 26 8.300 34.300L10.800 34.900C11.200 28 11.600 18 12.600 11.500Z" fill="#8eaed2"></path><path d="M27.800 8.200C29 14 30 26 30.600 34.300L28.300 34.900C27.800 28 27.400 18 26.400 11.500Z" fill="#8eaed2"></path><path d="M17.700 5.400L19.700 12.900 21.900 5.800C20.500 5.300 19 5.200 17.700 5.400Z" fill="#3b3f4b"></path><path d="M17 4.700L15.200 8.600 19.600 16 19.700 12.900 17.700 5.400ZM22 4.700L24 8.400 22.800 10 24.200 10.400 19.600 16 19.700 12.900 21.900 5.800Z" fill="#a9c4e2"></path><path d="M19.600 16L19.200 35.700" stroke="#86a6ca" stroke-width=".5"></path><g fill="#6d655f"><circle cx="16.200" cy="18.600" r=".6"></circle><circle cx="23.200" cy="18.600" r=".6"></circle><circle cx="17" cy="22.800" r=".6"></circle><circle cx="21.800" cy="22.800" r=".6"></circle><circle cx="17" cy="27.400" r=".6"></circle><circle cx="21.500" cy="27.400" r=".6"></circle></g><path d="M8.400 34.200l2.300.600M28.400 34.800l2.100-.6" stroke="#a87f62" stroke-width=".7"></path></svg></div>
<span class="t" style="left: 411px; top: 652.3px; font-size: 15px; font-weight: 400; color: rgb(34, 34, 34); letter-spacing: -0.276px; margin-right: 0.276px;">Women's blazer front flaps and...</span>
<span class="t" style="left: 411px; top: 676px; font-size: 13px; font-weight: 400; color: rgb(107, 107, 107); letter-spacing: 0.001px; margin-right: -0.001px;">ID: 398482093094</span>
<span class="t" style="left: 411px; top: 698px; font-size: 13px; font-weight: 400; color: rgb(107, 107, 107); letter-spacing: -0.353px; margin-right: 0.353px;">$55.99</span>
<div class="b" style="left:335.00px;top:741.00px;width:16.00px;height:16.00px;background:#fff;border-radius:3.5px;border:1px solid #b8b8b8;"></div>
<div class="b" style="left:363px;top:740px;width:40px;height:40px;border:1px solid #e9e9e9;border-radius:6px;background:#fbfbfb;overflow:hidden"><svg class="b" style="left:-1px;top:-1px" width="40" height="40" viewBox="0 0 40 40"><defs><pattern id="st1" width="1.600" height="1.600" patternUnits="userSpaceOnUse" patternTransform="rotate(-28)"><rect width="1.600" height="1.600" fill="#c2c2c2"></rect><rect width="1.600" height=".75" fill="#8c8c8c"></rect></pattern><pattern id="st2" width="1.600" height="1.600" patternUnits="userSpaceOnUse" patternTransform="rotate(32)"><rect width="1.600" height="1.600" fill="#cbcbcb"></rect><rect width="1.600" height=".7" fill="#999"></rect></pattern></defs><path d="M14.200 3.300H20V36.600C14 36.600 8 35 4 32.800C7.500 23 10.500 11 14.200 3.300Z" fill="url(#st1)"></path><path d="M20 3.300H25.600C29.300 11 32.300 23 35.800 32.800C32 35 26 36.600 20 36.600Z" fill="url(#st2)"></path><path d="M4 32.800C5.500 29 7 24 8.500 19.500L8 34.500Z" fill="#a0a0a0" opacity=".5"></path><path d="M20.100 8L19.600 36.500" stroke="#7a7a7a" stroke-width=".9"></path></svg></div>
<span class="t" style="left: 411px; top: 742.3px; font-size: 15px; font-weight: 400; color: rgb(34, 34, 34); letter-spacing: -0.313px; margin-right: 0.313px;">Flair skirt</span>
<span class="t" style="left: 411px; top: 766px; font-size: 13px; font-weight: 400; color: rgb(107, 107, 107); letter-spacing: 0.001px; margin-right: -0.001px;">ID: 398482093094</span>
<span class="t" style="left: 411px; top: 788px; font-size: 13px; font-weight: 400; color: rgb(107, 107, 107); letter-spacing: -0.353px; margin-right: 0.353px;">$55.99</span>
<div class="b" style="left:335.00px;top:851.00px;width:16.00px;height:16.00px;background:#fff;border-radius:3.5px;border:1px solid #b8b8b8;"></div>
<div class="b" style="left:363px;top:850px;width:40px;height:40px;border:1px solid #e9e9e9;border-radius:6px;background:#fbfbfb;overflow:hidden"><svg class="b" style="left:-1px;top:-1px" width="40" height="40" viewBox="0 0 40 40"><path d="M15.100 1C17 3.400 22.500 3.400 24 1L26.800 2.600C28 6 28.500 9.500 28.800 13L25.200 14.200 24.600 10.500 24.100 13.800C25.500 21 27 30 27.900 37.600C25 39.300 14 39.300 10.900 37.600C11.800 30 13.800 21 15.300 13.800L14.800 10.500 13.800 14.300 10.300 13.500C10.700 9.500 11.300 6 12.300 2.600Z" fill="#e1c463"></path><path d="M15.100 1C17 3.400 22.500 3.400 24 1" stroke="#b89a45" stroke-width=".7" fill="none"></path><path d="M15.300 13.400H24.100V15H15.300Z" fill="#cdae4e"></path><path d="M19.300 14.200L20.900 14.200 22.300 21.300 21 21.500Z" fill="#c9a947"></path><circle cx="20.100" cy="15.400" r="1.100" fill="#c3a343"></circle><path d="M17 16C16 24 15 31 14.500 38.500M23 17C23.800 24 24.600 31 25 38.300" stroke="#d2b455" stroke-width=".6" fill="none"></path></svg></div>
<span class="t" style="left: 411px; top: 852.3px; font-size: 15px; font-weight: 400; color: rgb(34, 34, 34); letter-spacing: -0.363px; margin-right: 0.363px;">Poplin dress with...</span>
<span class="t" style="left: 411px; top: 876px; font-size: 13px; font-weight: 400; color: rgb(107, 107, 107); letter-spacing: 0.001px; margin-right: -0.001px;">ID: 398482093094</span>
<span class="t" style="left: 411px; top: 898px; font-size: 13px; font-weight: 400; color: rgb(107, 107, 107); letter-spacing: -0.753px; margin-right: 0.753px;">$79.99</span>
<div class="b" style="left:335.00px;top:941.00px;width:16.00px;height:16.00px;background:#fff;border-radius:3.5px;border:1px solid #b8b8b8;"></div>
<div class="b" style="left:363px;top:940px;width:40px;height:40px;border:1px solid #e9e9e9;border-radius:6px;background:#fbfbfb;overflow:hidden"><svg class="b" style="left:-1px;top:-1px" width="40" height="40" viewBox="0 0 40 40"><path d="M17 4.700L22 4.700 27.800 8.200C29 14 30 26 30.600 34.300L28.300 34.900 27.900 32.500 27.800 35.200C24 36.100 15 36.100 11.400 35.200L11.300 32.500 10.800 34.900 8.300 34.300C8.800 26 9.800 14 11 8.200Z" fill="#9bb9da"></path><path d="M11 8.200C10 14 9 26 8.300 34.300L10.800 34.900C11.200 28 11.600 18 12.600 11.500Z" fill="#8eaed2"></path><path d="M27.800 8.200C29 14 30 26 30.600 34.300L28.300 34.900C27.800 28 27.400 18 26.400 11.500Z" fill="#8eaed2"></path><path d="M17.700 5.400L19.700 12.900 21.900 5.800C20.500 5.300 19 5.200 17.700 5.400Z" fill="#3b3f4b"></path><path d="M17 4.700L15.200 8.600 19.600 16 19.700 12.900 17.700 5.400ZM22 4.700L24 8.400 22.800 10 24.200 10.400 19.600 16 19.700 12.900 21.900 5.800Z" fill="#a9c4e2"></path><path d="M19.600 16L19.200 35.700" stroke="#86a6ca" stroke-width=".5"></path><g fill="#6d655f"><circle cx="16.200" cy="18.600" r=".6"></circle><circle cx="23.200" cy="18.600" r=".6"></circle><circle cx="17" cy="22.800" r=".6"></circle><circle cx="21.800" cy="22.800" r=".6"></circle><circle cx="17" cy="27.400" r=".6"></circle><circle cx="21.500" cy="27.400" r=".6"></circle></g><path d="M8.400 34.200l2.300.600M28.400 34.800l2.100-.6" stroke="#a87f62" stroke-width=".7"></path></svg></div>
<span class="t" style="left: 411px; top: 942.3px; font-size: 15px; font-weight: 400; color: rgb(34, 34, 34); letter-spacing: -0.276px; margin-right: 0.276px;">Women's blazer front flaps and...</span>
<span class="t" style="left: 411px; top: 966px; font-size: 13px; font-weight: 400; color: rgb(107, 107, 107); letter-spacing: 0.001px; margin-right: -0.001px;">ID: 398482093094</span>
<span class="t" style="left: 411px; top: 988px; font-size: 13px; font-weight: 400; color: rgb(107, 107, 107); letter-spacing: -0.353px; margin-right: 0.353px;">$55.99</span>
<div class="b" style="left:335.00px;top:1031.00px;width:16.00px;height:16.00px;background:#fff;border-radius:3.5px;border:1px solid #b8b8b8;"></div>
<div class="b" style="left:363px;top:1030px;width:40px;height:40px;border:1px solid #e9e9e9;border-radius:6px;background:#fbfbfb;overflow:hidden"><svg class="b" style="left:-1px;top:-1px" width="40" height="40" viewBox="0 0 40 40"><path d="M17 4.700L22 4.700 27.800 8.200C29 14 30 26 30.600 34.300L28.300 34.900 27.900 32.500 27.800 35.200C24 36.100 15 36.100 11.400 35.200L11.300 32.500 10.800 34.900 8.300 34.300C8.800 26 9.800 14 11 8.200Z" fill="#9bb9da"></path><path d="M11 8.200C10 14 9 26 8.300 34.300L10.800 34.900C11.200 28 11.600 18 12.600 11.500Z" fill="#8eaed2"></path><path d="M27.800 8.200C29 14 30 26 30.600 34.300L28.300 34.900C27.800 28 27.400 18 26.400 11.500Z" fill="#8eaed2"></path><path d="M17.700 5.400L19.700 12.900 21.900 5.800C20.500 5.300 19 5.200 17.700 5.400Z" fill="#3b3f4b"></path><path d="M17 4.700L15.200 8.600 19.600 16 19.700 12.900 17.700 5.400ZM22 4.700L24 8.400 22.800 10 24.200 10.400 19.600 16 19.700 12.900 21.900 5.800Z" fill="#a9c4e2"></path><path d="M19.600 16L19.200 35.700" stroke="#86a6ca" stroke-width=".5"></path><g fill="#6d655f"><circle cx="16.200" cy="18.600" r=".6"></circle><circle cx="23.200" cy="18.600" r=".6"></circle><circle cx="17" cy="22.800" r=".6"></circle><circle cx="21.800" cy="22.800" r=".6"></circle><circle cx="17" cy="27.400" r=".6"></circle><circle cx="21.500" cy="27.400" r=".6"></circle></g><path d="M8.400 34.200l2.300.600M28.400 34.800l2.100-.6" stroke="#a87f62" stroke-width=".7"></path></svg></div>
<span class="t" style="left: 411px; top: 1032.3px; font-size: 15px; font-weight: 400; color: rgb(34, 34, 34); letter-spacing: -0.276px; margin-right: 0.276px;">Women's blazer front flaps and...</span>
<span class="t" style="left: 411px; top: 1056px; font-size: 13px; font-weight: 400; color: rgb(107, 107, 107); letter-spacing: 0.001px; margin-right: -0.001px;">ID: 398482093094</span>
<span class="t" style="left: 411px; top: 1078px; font-size: 13px; font-weight: 400; color: rgb(107, 107, 107); letter-spacing: -0.353px; margin-right: 0.353px;">$55.99</span>
<svg class="b" style="left:521.80px;top:875.90px;" width="15" height="15" viewBox="0 0 15 15" fill="none"><rect x="1.200" y="5" width="8.400" height="8.400" rx="1.300" stroke="#666" stroke-width="1.500"></rect><path d="M5 4.800V2.800c0-.7.500-1.200 1.200-1.200h6c.7 0 1.200.5 1.200 1.200v6c0 .7-.5 1.200-1.200 1.200H9.800" stroke="#666" stroke-width="1.500"></path></svg>
<svg class="b" style="left:411.20px;top:809.50px;" width="15" height="15" viewBox="0 0 15 15" fill="none"><circle cx="7.500" cy="7.500" r="7.200" fill="#e03a50"></circle><path d="M5 5l5 5M10 5l-5 5" stroke="#fff" stroke-width="1.500" stroke-linecap="round"></path></svg>
<span class="t" style="left: 431px; top: 810px; font-size: 13px; font-weight: 400; color: rgb(224, 58, 80); letter-spacing: -0.345px; margin-right: 0.345px;">Product unavailable</span>
<div class="b" style="left:431.00px;top:824.80px;width:109.00px;height:1.00px;background:transparent;border-radius:0px;background:repeating-linear-gradient(90deg,#a0a0a0 0 2px,transparent 2px 4px);"></div>
<div class="b" style="left:636px;top:561px;width:20px;height:600px;overflow:hidden">
<span class="t" style="right:12.500px;top:90.80px;font-size:15px;color:#222">15%</span>
<span class="t" style="right:12.500px;top:110.80px;font-size:15px;color:#222">15%</span>
<span class="t" style="right:12.500px;top:180.80px;font-size:15px;color:#222">15%</span>
<span class="t" style="right:12.500px;top:200.80px;font-size:15px;color:#222">15%</span>
<span class="t" style="right:12.500px;top:380.80px;font-size:15px;color:#222">15%</span>
<span class="t" style="right:12.500px;top:400.80px;font-size:15px;color:#222">15%</span>
<span class="t" style="right:12.500px;top:470.80px;font-size:15px;color:#222">15%</span>
<span class="t" style="right:12.500px;top:490.80px;font-size:15px;color:#222">15%</span>
<svg class="b" style="left:-6.500px;top:292px" width="14" height="14" viewBox="0 0 14 14" fill="none"><path d="M6.4 2.2H3a1 1 0 0 0-1 1V11a1 1 0 0 0 1 1h7.8a1 1 0 0 0 1-1V7.6" stroke="#444" stroke-width="1.3" stroke-linecap="round"></path><path d="M10.6 1.6l1.9 1.9-5 5-2.3.5.5-2.4z" stroke="#444" stroke-width="1.2" stroke-linejoin="round"></path></svg>
<svg class="b" style="left:-6.500px;top:312px" width="14" height="14" viewBox="0 0 14 14" fill="none"><path d="M6.4 2.2H3a1 1 0 0 0-1 1V11a1 1 0 0 0 1 1h7.8a1 1 0 0 0 1-1V7.6" stroke="#444" stroke-width="1.3" stroke-linecap="round"></path><path d="M10.6 1.6l1.9 1.9-5 5-2.3.5.5-2.4z" stroke="#444" stroke-width="1.2" stroke-linejoin="round"></path></svg>
</div>
<div class="b" style="left:636.00px;top:561.00px;width:7.00px;height:600.00px;background:transparent;border-radius:0px;background:linear-gradient(90deg,rgba(0,0,0,0.055),rgba(0,0,0,0));"></div>
<span class="t" style="left: 668.3px; top: 652.3px; font-size: 15px; font-weight: 400; color: rgb(34, 34, 34); letter-spacing: -0.255px; margin-right: 0.255px;">Not created</span>
<span class="t" style="left: 668.3px; top: 742.3px; font-size: 15px; font-weight: 400; color: rgb(34, 34, 34); letter-spacing: -0.641px; margin-right: 0.641px;">Manual</span>
<span class="t" style="left: 668.3px; top: 766px; font-size: 13px; font-weight: 400; color: rgb(107, 107, 107); letter-spacing: -0.363px; margin-right: 0.363px;">20 available</span>
<span class="t" style="left: 668.3px; top: 852.3px; font-size: 15px; font-weight: 400; color: rgb(34, 34, 34); letter-spacing: -0.005px; margin-right: 0.005px;">Auto-optimized</span>
<span class="t" style="left: 668.3px; top: 876px; font-size: 13px; font-weight: 400; color: rgb(107, 107, 107); letter-spacing: -0.494px; margin-right: 0.494px;">100 available</span>
<svg class="b" style="left:786.80px;top:852.50px;" width="14.5" height="14.5" viewBox="0 0 14 14" fill="none"><path d="M6.4 2.2H3a1 1 0 0 0-1 1V11a1 1 0 0 0 1 1h7.8a1 1 0 0 0 1-1V7.6" stroke="#5a5a5a" stroke-width="1.15" stroke-linecap="round"></path><path d="M10.6 1.6l1.9 1.9-5 5-2.3.5.5-2.4z" stroke="#5a5a5a" stroke-width="1.1" stroke-linejoin="round"></path></svg>
<span class="t" style="left: 668.3px; top: 942.3px; font-size: 15px; font-weight: 400; color: rgb(34, 34, 34); letter-spacing: -0.255px; margin-right: 0.255px;">Not created</span>
<span class="t" style="left: 668.3px; top: 1032.3px; font-size: 15px; font-weight: 400; color: rgb(34, 34, 34); letter-spacing: -0.255px; margin-right: 0.255px;">Not created</span>
<span class="t" style="left: 828.3px; top: 652.3px; font-size: 15px; font-weight: 400; color: rgb(34, 34, 34); letter-spacing: -0.292px; margin-right: 0.292px;">Active</span>
<span class="t" style="left: 828.3px; top: 742.3px; font-size: 15px; font-weight: 400; color: rgb(34, 34, 34); letter-spacing: -0.292px; margin-right: 0.292px;">Active</span>
<span class="t" style="left: 828.3px; top: 852.3px; font-size: 15px; font-weight: 400; color: rgb(34, 34, 34); letter-spacing: -0.292px; margin-right: 0.292px;">Active</span>
<span class="t" style="left: 828.3px; top: 942.3px; font-size: 15px; font-weight: 400; color: rgb(34, 34, 34); letter-spacing: -0.292px; margin-right: 0.292px;">Active</span>
<span class="t" style="left: 828.3px; top: 1032.3px; font-size: 15px; font-weight: 400; color: rgb(34, 34, 34); letter-spacing: -0.292px; margin-right: 0.292px;">Active</span>
<svg class="b" style="left:874.30px;top:852.50px;" width="14.5" height="14.5" viewBox="0 0 14 14" fill="none"><path d="M6.4 2.2H3a1 1 0 0 0-1 1V11a1 1 0 0 0 1 1h7.8a1 1 0 0 0 1-1V7.6" stroke="#5a5a5a" stroke-width="1.15" stroke-linecap="round"></path><path d="M10.6 1.6l1.9 1.9-5 5-2.3.5.5-2.4z" stroke="#5a5a5a" stroke-width="1.1" stroke-linejoin="round"></path></svg>
<span class="t" style="left: 988.3px; top: 652.73px; font-size: 14.5px; font-weight: 400; color: rgb(0, 153, 149); letter-spacing: -2.141px; margin-right: 2.141px;">10</span>
<span class="t" style="left: 988.3px; top: 742.73px; font-size: 14.5px; font-weight: 400; color: rgb(0, 153, 149); letter-spacing: -2.141px; margin-right: 2.141px;">10</span>
<span class="t" style="left: 988.3px; top: 942.73px; font-size: 14.5px; font-weight: 400; color: rgb(0, 153, 149); letter-spacing: -2.141px; margin-right: 2.141px;">10</span>
<span class="t" style="left: 988.3px; top: 1032.73px; font-size: 14.5px; font-weight: 400; color: rgb(0, 153, 149); letter-spacing: -2.141px; margin-right: 2.141px;">10</span>
<span class="t" style="left: 988.3px; top: 852.3px; font-size: 15px; font-weight: 400; color: rgb(0, 153, 149); letter-spacing: 0px;">1</span>
<span class="t" style="left: 988.3px; top: 876px; font-size: 13px; font-weight: 400; color: rgb(0, 153, 149); -webkit-text-stroke: 0.3px rgb(0, 153, 149); letter-spacing: -0.318px; margin-right: 0.318px;">View</span>
<div class="b" style="left:1093px;top:650px;width:40px;height:40px;border-radius:20px;background:#fff;border:1px solid #efefef"></div>
<svg class="b" style="left:1102.60px;top:658.00px;" width="21" height="25" viewBox="0 0 21 25" fill="none"><path d="M6.800 7V5.600a3.700 3.700 0 0 1 7.400 0V7" stroke="#25f4ee" stroke-width="1.300" fill="none" transform="translate(-.6,0)"></path><path d="M6.800 7V5.600a3.700 3.700 0 0 1 7.400 0V7" stroke="#fe2c55" stroke-width="1.300" fill="none" transform="translate(.6,0)"></path><path d="M6.800 7V5.600a3.700 3.700 0 0 1 7.400 0V7" stroke="#111" stroke-width="1.300" fill="none"></path><path d="M3.700 6H17.300L19 23H2Z" fill="#25f4ee" transform="translate(-.7,-.1)"></path><path d="M3.700 6H17.300L19 23H2Z" fill="#fe2c55" transform="translate(.7,.3)"></path><path d="M3.700 6H17.300L19 23H2Z" fill="#000"></path><circle cx="6.800" cy="7.300" r=".7" fill="#fff"></circle><circle cx="14.200" cy="7.300" r=".7" fill="#fff"></circle><g transform="translate(5,9.300) scale(0.47)"><path d="M12.525.02c1.31-.02 2.61-.01 3.91-.02.08 1.53.63 3.09 1.75 4.17 1.12 1.11 2.7 1.62 4.24 1.79v4.03c-1.44-.05-2.89-.35-4.2-.97-.57-.26-1.1-.59-1.62-.93-.01 2.92.01 5.84-.02 8.75-.08 1.4-.54 2.79-1.35 3.94-1.31 1.92-3.58 3.17-5.91 3.21-1.43.08-2.86-.31-4.08-1.03-2.02-1.19-3.44-3.37-3.65-5.71-.02-.5-.03-1-.01-1.49.18-1.9 1.12-3.72 2.58-4.96 1.66-1.44 3.98-2.13 6.15-1.72.02 1.48-.04 2.96-.04 4.44-.99-.32-2.15-.23-3.02.37-.63.41-1.11 1.04-1.36 1.75-.21.51-.15 1.07-.14 1.61.24 1.64 1.82 3.02 3.5 2.87 1.12-.01 2.19-.66 2.77-1.61.19-.33.4-.67.41-1.06.1-1.79.06-3.57.07-5.36.01-4.03-.01-8.05.02-12.07z" fill="#fff"></path></g></svg>
<div class="b" style="left:1141.3px;top:655.5px;width:31.400px;height:31.400px;border-radius:16px;background:rgba(255,255,255,0.25);border:1px solid rgba(0,0,0,0.07)"></div>
<svg class="b" style="left:1144.00px;top:655.00px;" width="26" height="30" viewBox="0 0 26 30" fill="none"><path d="M7 7.500V7.200a6 5.400 0 0 1 12 0v.3" stroke="#4a4a4a" stroke-width="1.500" fill="none"></path><path d="M.8 6.900C5 6.900 9.500 7.300 13 8.700C16.500 7.300 21 6.900 25.200 6.900V22.400A6.500 6.500 0 0 1 18.700 28.900H.8Z" fill="#5cb85c"></path><path d="M13 8.700C16.500 7.300 21 6.900 25.200 6.900V22.400A6.500 6.500 0 0 1 18.700 28.900H13Z" fill="#4aa74f"></path><path d="M3.500 28.900C4.500 24 8.500 21.500 13 21.500V28.900Z" fill="#84c56a"></path><path d="M13 21.500C17.500 21.500 21 24 22.500 27.600C21.400 28.400 20.100 28.900 18.700 28.900H13Z" fill="#5cb85c"></path><circle cx="7.700" cy="15.600" r="4.500" fill="#fff"></circle><circle cx="18.500" cy="15.600" r="4.500" fill="#fff"></circle><circle cx="8.500" cy="15.400" r="2.900" fill="#2d2d2d"></circle><circle cx="17.600" cy="15.400" r="2.900" fill="#2d2d2d"></circle><path d="M8.500 15.400L9.500 12.200 11.500 14.400Z" fill="#fff"></path><path d="M17.600 15.400L18.600 12.200 20.600 14.400Z" fill="#fff"></path><path d="M9.900 20.300C11.300 19 14.700 19 16.100 20.300C16.400 20.600 16.300 21 16.100 21.300L13.900 23.900C13.400 24.400 12.600 24.400 12.100 23.900L9.900 21.300C9.700 21 9.600 20.600 9.900 20.300Z" fill="#f9c511"></path></svg>
<div class="b" style="left:1093px;top:740px;width:40px;height:40px;border-radius:20px;background:#fff;border:1px solid #efefef"></div>
<svg class="b" style="left:1102.60px;top:748.00px;" width="21" height="25" viewBox="0 0 21 25" fill="none"><path d="M6.800 7V5.600a3.700 3.700 0 0 1 7.400 0V7" stroke="#25f4ee" stroke-width="1.300" fill="none" transform="translate(-.6,0)"></path><path d="M6.800 7V5.600a3.700 3.700 0 0 1 7.400 0V7" stroke="#fe2c55" stroke-width="1.300" fill="none" transform="translate(.6,0)"></path><path d="M6.800 7V5.600a3.700 3.700 0 0 1 7.400 0V7" stroke="#111" stroke-width="1.300" fill="none"></path><path d="M3.700 6H17.300L19 23H2Z" fill="#25f4ee" transform="translate(-.7,-.1)"></path><path d="M3.700 6H17.300L19 23H2Z" fill="#fe2c55" transform="translate(.7,.3)"></path><path d="M3.700 6H17.300L19 23H2Z" fill="#000"></path><circle cx="6.800" cy="7.300" r=".7" fill="#fff"></circle><circle cx="14.200" cy="7.300" r=".7" fill="#fff"></circle><g transform="translate(5,9.300) scale(0.47)"><path d="M12.525.02c1.31-.02 2.61-.01 3.91-.02.08 1.53.63 3.09 1.75 4.17 1.12 1.11 2.7 1.62 4.24 1.79v4.03c-1.44-.05-2.89-.35-4.2-.97-.57-.26-1.1-.59-1.62-.93-.01 2.92.01 5.84-.02 8.75-.08 1.4-.54 2.79-1.35 3.94-1.31 1.92-3.58 3.17-5.91 3.21-1.43.08-2.86-.31-4.08-1.03-2.02-1.19-3.44-3.37-3.65-5.71-.02-.5-.03-1-.01-1.49.18-1.9 1.12-3.72 2.58-4.96 1.66-1.44 3.98-2.13 6.15-1.72.02 1.48-.04 2.96-.04 4.44-.99-.32-2.15-.23-3.02.37-.63.41-1.11 1.04-1.36 1.75-.21.51-.15 1.07-.14 1.61.24 1.64 1.82 3.02 3.5 2.87 1.12-.01 2.19-.66 2.77-1.61.19-.33.4-.67.41-1.06.1-1.79.06-3.57.07-5.36.01-4.03-.01-8.05.02-12.07z" fill="#fff"></path></g></svg>
<div class="b" style="left:1097.3px;top:855.5px;width:31.400px;height:31.400px;border-radius:16px;background:rgba(255,255,255,0.25);border:1px solid rgba(0,0,0,0.07)"></div>
<svg class="b" style="left:1100.00px;top:855.00px;" width="26" height="30" viewBox="0 0 26 30" fill="none"><path d="M7 7.500V7.200a6 5.400 0 0 1 12 0v.3" stroke="#4a4a4a" stroke-width="1.500" fill="none"></path><path d="M.8 6.900C5 6.900 9.500 7.300 13 8.700C16.500 7.300 21 6.900 25.200 6.900V22.400A6.500 6.500 0 0 1 18.700 28.900H.8Z" fill="#5cb85c"></path><path d="M13 8.700C16.500 7.300 21 6.900 25.200 6.900V22.400A6.500 6.500 0 0 1 18.700 28.900H13Z" fill="#4aa74f"></path><path d="M3.500 28.900C4.500 24 8.500 21.500 13 21.500V28.900Z" fill="#84c56a"></path><path d="M13 21.500C17.500 21.500 21 24 22.500 27.600C21.400 28.400 20.100 28.900 18.700 28.900H13Z" fill="#5cb85c"></path><circle cx="7.700" cy="15.600" r="4.500" fill="#fff"></circle><circle cx="18.500" cy="15.600" r="4.500" fill="#fff"></circle><circle cx="8.500" cy="15.400" r="2.900" fill="#2d2d2d"></circle><circle cx="17.600" cy="15.400" r="2.900" fill="#2d2d2d"></circle><path d="M8.500 15.400L9.500 12.200 11.500 14.400Z" fill="#fff"></path><path d="M17.600 15.400L18.600 12.200 20.600 14.400Z" fill="#fff"></path><path d="M9.900 20.300C11.300 19 14.700 19 16.100 20.300C16.400 20.600 16.300 21 16.100 21.300L13.900 23.900C13.400 24.400 12.600 24.400 12.100 23.900L9.900 21.300C9.700 21 9.600 20.600 9.900 20.300Z" fill="#f9c511"></path></svg>
<div class="b" style="left:1093px;top:940px;width:40px;height:40px;border-radius:20px;background:#fff;border:1px solid #efefef"></div>
<svg class="b" style="left:1102.60px;top:948.00px;" width="21" height="25" viewBox="0 0 21 25" fill="none"><path d="M6.800 7V5.600a3.700 3.700 0 0 1 7.400 0V7" stroke="#25f4ee" stroke-width="1.300" fill="none" transform="translate(-.6,0)"></path><path d="M6.800 7V5.600a3.700 3.700 0 0 1 7.400 0V7" stroke="#fe2c55" stroke-width="1.300" fill="none" transform="translate(.6,0)"></path><path d="M6.800 7V5.600a3.700 3.700 0 0 1 7.400 0V7" stroke="#111" stroke-width="1.300" fill="none"></path><path d="M3.700 6H17.300L19 23H2Z" fill="#25f4ee" transform="translate(-.7,-.1)"></path><path d="M3.700 6H17.300L19 23H2Z" fill="#fe2c55" transform="translate(.7,.3)"></path><path d="M3.700 6H17.300L19 23H2Z" fill="#000"></path><circle cx="6.800" cy="7.300" r=".7" fill="#fff"></circle><circle cx="14.200" cy="7.300" r=".7" fill="#fff"></circle><g transform="translate(5,9.300) scale(0.47)"><path d="M12.525.02c1.31-.02 2.61-.01 3.91-.02.08 1.53.63 3.09 1.75 4.17 1.12 1.11 2.7 1.62 4.24 1.79v4.03c-1.44-.05-2.89-.35-4.2-.97-.57-.26-1.1-.59-1.62-.93-.01 2.92.01 5.84-.02 8.75-.08 1.4-.54 2.79-1.35 3.94-1.31 1.92-3.58 3.17-5.91 3.21-1.43.08-2.86-.31-4.08-1.03-2.02-1.19-3.44-3.37-3.65-5.71-.02-.5-.03-1-.01-1.49.18-1.9 1.12-3.72 2.58-4.96 1.66-1.44 3.98-2.13 6.15-1.72.02 1.48-.04 2.96-.04 4.44-.99-.32-2.15-.23-3.02.37-.63.41-1.11 1.04-1.36 1.75-.21.51-.15 1.07-.14 1.61.24 1.64 1.82 3.02 3.5 2.87 1.12-.01 2.19-.66 2.77-1.61.19-.33.4-.67.41-1.06.1-1.79.06-3.57.07-5.36.01-4.03-.01-8.05.02-12.07z" fill="#fff"></path></g></svg>
<div class="b" style="left:1093px;top:1030px;width:40px;height:40px;border-radius:20px;background:#fff;border:1px solid #efefef"></div>
<svg class="b" style="left:1102.60px;top:1038.00px;" width="21" height="25" viewBox="0 0 21 25" fill="none"><path d="M6.800 7V5.600a3.700 3.700 0 0 1 7.400 0V7" stroke="#25f4ee" stroke-width="1.300" fill="none" transform="translate(-.6,0)"></path><path d="M6.800 7V5.600a3.700 3.700 0 0 1 7.400 0V7" stroke="#fe2c55" stroke-width="1.300" fill="none" transform="translate(.6,0)"></path><path d="M6.800 7V5.600a3.700 3.700 0 0 1 7.400 0V7" stroke="#111" stroke-width="1.300" fill="none"></path><path d="M3.700 6H17.300L19 23H2Z" fill="#25f4ee" transform="translate(-.7,-.1)"></path><path d="M3.700 6H17.300L19 23H2Z" fill="#fe2c55" transform="translate(.7,.3)"></path><path d="M3.700 6H17.300L19 23H2Z" fill="#000"></path><circle cx="6.800" cy="7.300" r=".7" fill="#fff"></circle><circle cx="14.200" cy="7.300" r=".7" fill="#fff"></circle><g transform="translate(5,9.300) scale(0.47)"><path d="M12.525.02c1.31-.02 2.61-.01 3.91-.02.08 1.53.63 3.09 1.75 4.17 1.12 1.11 2.7 1.62 4.24 1.79v4.03c-1.44-.05-2.89-.35-4.2-.97-.57-.26-1.1-.59-1.62-.93-.01 2.92.01 5.84-.02 8.75-.08 1.4-.54 2.79-1.35 3.94-1.31 1.92-3.58 3.17-5.91 3.21-1.43.08-2.86-.31-4.08-1.03-2.02-1.19-3.44-3.37-3.65-5.71-.02-.5-.03-1-.01-1.49.18-1.9 1.12-3.72 2.58-4.96 1.66-1.44 3.98-2.13 6.15-1.72.02 1.48-.04 2.96-.04 4.44-.99-.32-2.15-.23-3.02.37-.63.41-1.11 1.04-1.36 1.75-.21.51-.15 1.07-.14 1.61.24 1.64 1.82 3.02 3.5 2.87 1.12-.01 2.19-.66 2.77-1.61.19-.33.4-.67.41-1.06.1-1.79.06-3.57.07-5.36.01-4.03-.01-8.05.02-12.07z" fill="#fff"></path></g></svg>
<div class="b" style="left:1201.00px;top:648.00px;width:83.00px;height:24.00px;background:#f2f2f2;border-radius:4px;"></div>
<span class="t" style="left: 1209.3px; top: 652.7px; font-size: 13px; font-weight: 400; color: rgb(26, 26, 26); -webkit-text-stroke: 0.3px rgb(26, 26, 26); letter-spacing: -0.201px; margin-right: 0.201px;">View orders</span>
<div class="b" style="left:1288.00px;top:648.00px;width:24.00px;height:24.00px;background:#f2f2f2;border-radius:4px;"></div>
<svg class="b" style="left:1288.00px;top:648.00px;" width="24" height="24" viewBox="0 0 24 24" fill="none"><circle cx="6.900" cy="12" r="1.300" fill="#1a1a1a"></circle><circle cx="12.050" cy="12" r="1.300" fill="#1a1a1a"></circle><circle cx="17.200" cy="12" r="1.300" fill="#1a1a1a"></circle></svg>
<div class="b" style="left:1201.00px;top:738.00px;width:83.00px;height:24.00px;background:#f2f2f2;border-radius:4px;"></div>
<span class="t" style="left: 1209.3px; top: 742.7px; font-size: 13px; font-weight: 400; color: rgb(26, 26, 26); -webkit-text-stroke: 0.3px rgb(26, 26, 26); letter-spacing: -0.201px; margin-right: 0.201px;">View orders</span>
<div class="b" style="left:1288.00px;top:738.00px;width:24.00px;height:24.00px;background:#f2f2f2;border-radius:4px;"></div>
<svg class="b" style="left:1288.00px;top:738.00px;" width="24" height="24" viewBox="0 0 24 24" fill="none"><circle cx="6.900" cy="12" r="1.300" fill="#1a1a1a"></circle><circle cx="12.050" cy="12" r="1.300" fill="#1a1a1a"></circle><circle cx="17.200" cy="12" r="1.300" fill="#1a1a1a"></circle></svg>
<div class="b" style="left:1196.00px;top:850.00px;width:83.00px;height:24.00px;background:#e5e5e5;border-radius:4px;"></div>
<span class="t" style="left: 1204.3px; top: 854.7px; font-size: 13px; font-weight: 400; color: rgb(26, 26, 26); -webkit-text-stroke: 0.3px rgb(26, 26, 26); letter-spacing: -0.201px; margin-right: 0.201px;">View orders</span>
<div class="b" style="left:1283.00px;top:850.00px;width:24.00px;height:24.00px;background:#e5e5e5;border-radius:4px;"></div>
<svg class="b" style="left:1283.00px;top:850.00px;" width="24" height="24" viewBox="0 0 24 24" fill="none"><circle cx="6.900" cy="12" r="1.300" fill="#4a4a4a"></circle><circle cx="12.050" cy="12" r="1.300" fill="#4a4a4a"></circle><circle cx="17.200" cy="12" r="1.300" fill="#4a4a4a"></circle></svg>
<div class="b" style="left:1201.00px;top:938.00px;width:83.00px;height:24.00px;background:#f2f2f2;border-radius:4px;"></div>
<span class="t" style="left: 1209.3px; top: 942.7px; font-size: 13px; font-weight: 400; color: rgb(26, 26, 26); -webkit-text-stroke: 0.3px rgb(26, 26, 26); letter-spacing: -0.201px; margin-right: 0.201px;">View orders</span>
<div class="b" style="left:1288.00px;top:938.00px;width:24.00px;height:24.00px;background:#f2f2f2;border-radius:4px;"></div>
<svg class="b" style="left:1288.00px;top:938.00px;" width="24" height="24" viewBox="0 0 24 24" fill="none"><circle cx="6.900" cy="12" r="1.300" fill="#1a1a1a"></circle><circle cx="12.050" cy="12" r="1.300" fill="#1a1a1a"></circle><circle cx="17.200" cy="12" r="1.300" fill="#1a1a1a"></circle></svg>
<div class="b" style="left:1201.00px;top:1028.00px;width:83.00px;height:24.00px;background:#f2f2f2;border-radius:4px;"></div>
<span class="t" style="left: 1209.3px; top: 1032.7px; font-size: 13px; font-weight: 400; color: rgb(26, 26, 26); -webkit-text-stroke: 0.3px rgb(26, 26, 26); letter-spacing: -0.201px; margin-right: 0.201px;">View orders</span>
<div class="b" style="left:1288.00px;top:1028.00px;width:24.00px;height:24.00px;background:#f2f2f2;border-radius:4px;"></div>
<svg class="b" style="left:1288.00px;top:1028.00px;" width="24" height="24" viewBox="0 0 24 24" fill="none"><circle cx="6.900" cy="12" r="1.300" fill="#1a1a1a"></circle><circle cx="12.050" cy="12" r="1.300" fill="#1a1a1a"></circle><circle cx="17.200" cy="12" r="1.300" fill="#1a1a1a"></circle></svg>
<div class="b" style="left:1321.00px;top:561.00px;width:9.00px;height:600.00px;background:transparent;border-radius:0px;background:linear-gradient(90deg,rgba(0,0,0,0),rgba(0,0,0,0.1));"></div>
</div></div>
<div class="b" style="left:851.20px;top:824.50px;width:63.00px;height:67.00px;background:transparent;border-radius:0px;border:7px solid #f24848;border-radius:50%;"></div>
<svg class="b" style="left:868.00px;top:899.00px;" width="20" height="24" viewBox="0 0 20 24" fill="none"><path d="M7.200 3.200c0-.9.700-1.500 1.500-1.500s1.500.6 1.500 1.500v6.200l.3-.1c.1-.7.700-1.200 1.400-1.200.6 0 1.200.4 1.400 1 .2-.2.600-.4 1-.4.700 0 1.300.5 1.400 1.200.2-.1.400-.2.700-.2.800 0 1.400.6 1.400 1.400v3.600c0 1.600-.4 2.600-1 3.700-.3.600-.5 1.300-.5 2v.8H8.600v-.6c0-.9-.4-1.700-1.100-2.400l-3.900-3.700c-.6-.6-.6-1.500 0-2.100.6-.6 1.500-.6 2.100 0l1.500 1.400z" fill="#fff" stroke="#111" stroke-width="1.100" stroke-linejoin="round"></path></svg>
</div>
</body></html>
